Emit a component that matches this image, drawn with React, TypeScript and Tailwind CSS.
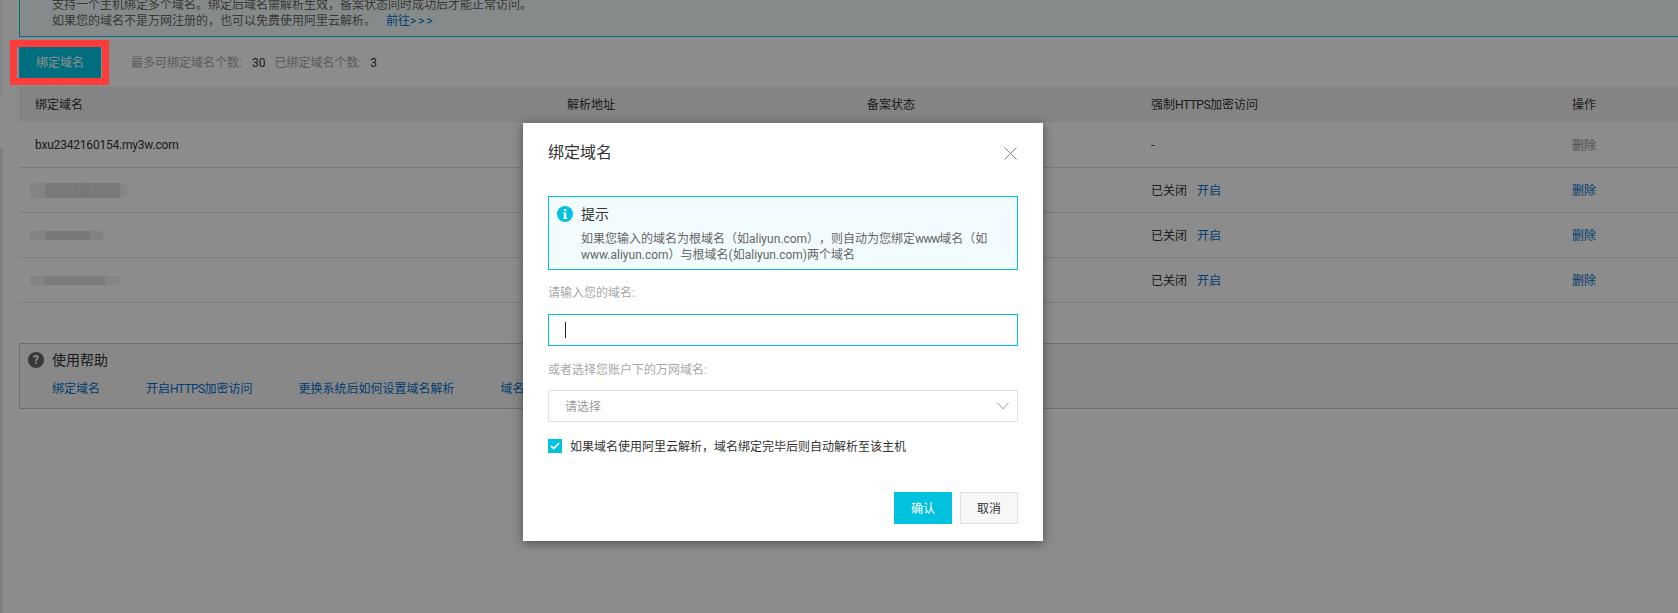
const rows = [
  { id: "first", domain: "bxu2342160154.my3w.com", https: false, locked: true },
  { id: "a", blur: "a", https: true, locked: false },
  { id: "b", blur: "b", https: true, locked: false },
  { id: "c", blur: "c", https: true, locked: false },
];

function Smudge({ kind }: { kind: string }) {
  if (kind === "a") {
    return (
      <div className="flex h-[15px] w-[98px] -ml-[5px] blur-[0.5px]">
        <div className="w-[15px] bg-[#f0f0f0]" />
        <div className="w-[30px] bg-[#e0dfdd]" />
        <div className="w-[15px] bg-[#d8dadc]" />
        <div className="w-[30px] bg-[#dedede]" />
        <div className="w-[8px] rounded-r-full bg-[#f2f2f2]" />
      </div>
    );
  }
  if (kind === "b") {
    return (
      <div className="flex h-[9px] w-[74px] -ml-[5px] blur-[0.5px]">
        <div className="w-[15px] bg-[#eeeeee]" />
        <div className="w-[45px] bg-[#dcdcdc]" />
        <div className="w-[14px] rounded-r-full bg-[#ececf0]" />
      </div>
    );
  }
  return (
    <div className="flex h-[9px] w-[90px] -ml-[5px] blur-[0.5px]">
      <div className="w-[15px] bg-[#eeeeee]" />
      <div className="w-[60px] bg-[#dedede]" />
      <div className="w-[15px] bg-[#f2f2f2]" />
    </div>
  );
}

function ConsolePage() {
  return (
    <div className="flex h-[613px] w-[1678px] overflow-hidden bg-white text-xs text-[#333333]">
      <aside className="flex w-[3px] shrink-0 flex-col">
        <div className="h-[96px] bg-[#f2f3f3]" />
        <div className="h-[51px]" />
        <div className="flex-1 bg-[#e8e9ec]" />
      </aside>
      <main className="ml-4 min-w-0 flex-1">
        <div className="-mt-[10px] border-b border-l border-[#00c1de] bg-[#f2fdfb] pt-[7px] pb-[7px] pl-[32px] leading-4 text-[#666666]">
          <p>支持一个主机绑定多个域名。绑定后域名需解析生效，备案状态同时成功后才能正常访问。</p>
          <p>
            如果您的域名不是万网注册的，也可以免费使用阿里云解析。
            <a className="ml-[10px] text-[#0070cc]">
              前往<span className="tracking-[2px]">&gt;&gt;&gt;</span>
            </a>
          </p>
        </div>

        <div className="mt-[10px] flex h-[31px] items-center">
          <button className="h-full w-[82px] bg-[#00c9e6] text-[#ffffff]">绑定域名</button>
          <span className="ml-[30px] text-[#a8a8a8]">最多可绑定域名个数:</span>
          <span className="ml-[10px]">30</span>
          <span className="ml-[9px] text-[#a8a8a8]">已绑定域名个数:</span>
          <span className="ml-[9px]">3</span>
        </div>

        <div className="mt-[9px]">
          <div className="grid h-[35px] grid-cols-[532px_300px_284px_421px_1fr] items-center bg-[#f0f0f0] pl-4">
            <span>绑定域名</span>
            <span>解析地址</span>
            <span>备案状态</span>
            <span>
              强制<span className="tracking-[-0.5px]">HTTPS</span>加密访问
            </span>
            <span>操作</span>
          </div>
          {rows.map((row, i) => (
            <div
              key={row.id}
              className={`grid grid-cols-[532px_300px_284px_421px_1fr] items-center border-b border-[#e1e1e1] pl-4 ${i === 0 ? "h-[46px]" : "h-[45px]"}`}
            >
              {row.blur ? <Smudge kind={row.blur} /> : <span className="tracking-[-0.2px]">{row.domain}</span>}
              <span />
              <span />
              {row.https ? (
                <span className="flex gap-[10px] pt-[2px]">
                  <span>已关闭</span>
                  <a className="text-[#0070cc]">开启</a>
                </span>
              ) : (
                <span>-</span>
              )}
              <a className={`pt-[2px] ${row.locked ? "text-[#909090]" : "text-[#0070cc]"}`}>删除</a>
            </div>
          ))}
        </div>

        <section className="mt-10 h-[66px] border border-r-0 border-[#cccccc] bg-[#f8f8f8]">
          <div className="mt-[6px] flex h-5 items-center gap-2 pl-2">
            <span className="flex h-4 w-4 items-center justify-center rounded-full bg-[#666666] text-xs font-bold text-white">
              ?
            </span>
            <span className="text-sm">使用帮助</span>
          </div>
          <div className="mt-[11px] ml-8 flex gap-[46px] whitespace-nowrap leading-4 text-[#0070cc]">
            <a>绑定域名</a>
            <a>
              开启<span className="tracking-[-0.6px]">HTTPS</span>加密访问
            </a>
            <a>更换系统后如何设置域名解析</a>
            <a>域名解析不生效</a>
          </div>
        </section>
      </main>
    </div>
  );
}

function BindDialog() {
  return (
    <div className="flex h-[418px] w-[520px] flex-col bg-white px-[25px] text-xs text-[#333333] shadow-[0_2px_10px_rgba(0,0,0,0.45)]">
      <div className="flex h-[60px] shrink-0 items-center justify-between pr-px">
        <h2 className="text-base font-normal">绑定域名</h2>
        <svg width="13" height="13" viewBox="0 0 13 13" fill="none" stroke="#7f7f7f" strokeWidth="1">
          <path d="M0.5 0.5 12.5 12.5M12.5 0.5 0.5 12.5" />
        </svg>
      </div>

      <div className="mt-[13px] flex h-[74px] gap-2 border border-[#00c1de] bg-[#f2fbfe] pl-2 pt-[7px]">
        <svg className="mt-[2px] shrink-0" width="16" height="16" viewBox="0 0 16 16">
          <circle cx="8" cy="8" r="8" fill="#00c1de" />
          <rect x="6.9" y="3" width="2.4" height="2.2" fill="#ffffff" />
          <path d="M6 6.6h3.3v5.2H10.300v1.200H6v-1.200h1v-4H6z" fill="#ffffff" />
        </svg>
        <div>
          <p className="text-sm leading-5">提示</p>
          <p className="mt-[7px] w-[420px] leading-4 text-[#666666]">
            如果您输入的域名为根域名（如aliyun.com），则自动为您绑定<span className="tracking-[-1px]">www</span>域名（如www.aliyun.com）与根域名(如aliyun.com)两个域名
          </p>
        </div>
      </div>

      <label className="mt-[15px] leading-4 text-[#a8a8a8]">请输入您的域名:</label>
      <div className="mt-[13px] flex h-8 shrink-0 items-center border border-[#00c1de] pl-4">
        <div className="h-4 w-px bg-[#222222]" />
      </div>

      <label className="mt-4 leading-4 text-[#a8a8a8]">或者选择您账户下的万网域名:</label>
      <div className="mt-3 flex h-8 shrink-0 items-center justify-between border border-[#e1e1e1] pl-4 pr-[8px] text-[#999999]">
        <span className="pt-[2px]">请选择</span>
        <svg width="12" height="8" viewBox="0 0 12 8" fill="none" stroke="#999999" strokeWidth="1">
          <path d="M0.5 0.8 6 6.800 11.500 0.8" />
        </svg>
      </div>

      <div className="mt-[17px] flex h-[14px] items-center gap-2">
        <span className="flex h-[14px] w-[14px] items-center justify-center bg-[#00c1de]">
          <svg width="10" height="8" viewBox="0 0 10 8" fill="none" stroke="#ffffff" strokeWidth="1.8">
            <path d="M1 4 3.800 6.600 9 1" />
          </svg>
        </span>
        <span className="pt-[2px]">如果域名使用阿里云解析，域名绑定完毕后则自动解析至该主机</span>
      </div>

      <div className="mt-[39px] flex justify-end gap-2">
        <button className="h-8 w-[58px] bg-[#00c1de] pt-[2px] text-white">确认</button>
        <button className="h-8 w-[58px] border border-[#e1e1e1] bg-[#f7f7f7] pt-[2px]">取消</button>
      </div>
    </div>
  );
}

export default function App() {
  return (
    <div className="relative h-[613px] w-[1678px] overflow-hidden font-['Roboto','Noto_Sans_CJK_SC',sans-serif] [text-spacing-trim:space-all]">
      <ConsolePage />
      <div className="absolute inset-0 bg-black/45 pl-[523px] pt-[123px]">
        <BindDialog />
      </div>
      {/* red marker drawn on the screenshot */}
      <div className="absolute left-[10px] top-[40px] h-[45px] w-[99px] border-[7px] border-[#ff3c3c]" />
    </div>
  );
}
